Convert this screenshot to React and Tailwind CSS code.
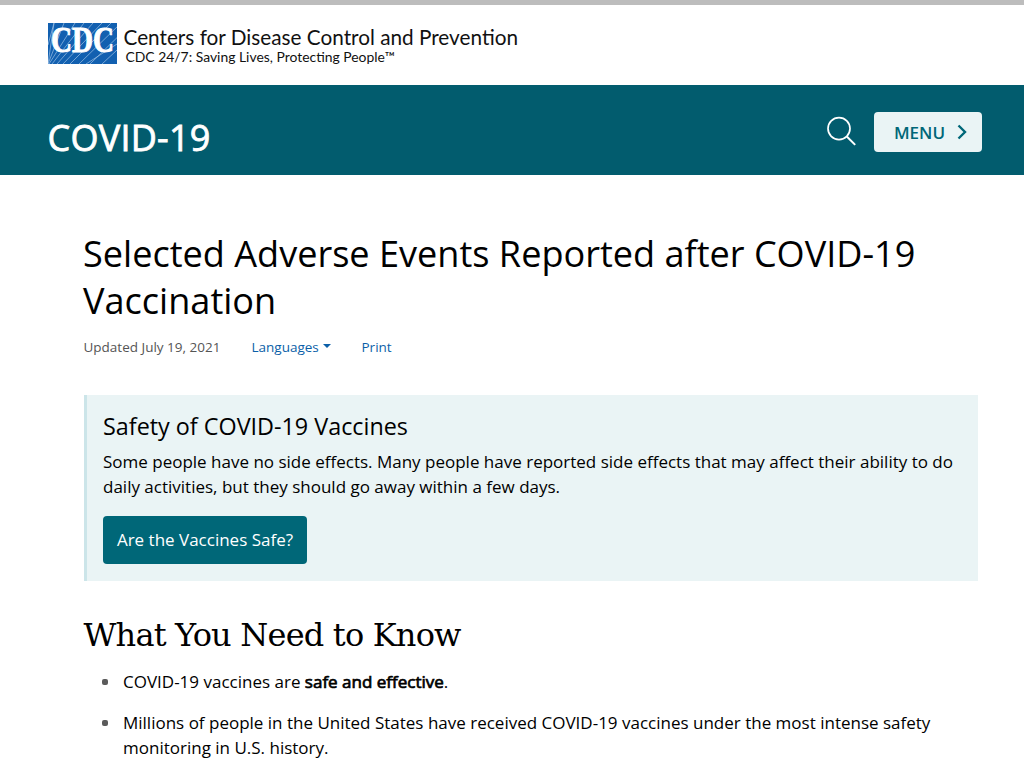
const keyPoints = [
  {
    id: 1,
    content: (
      <>
        COVID-19 vaccines are <strong className="font-normal [-webkit-text-stroke:0.7px_black]">safe and effective</strong>.
      </>
    ),
  },
  {
    id: 2,
    content:
      "Millions of people in the United States have received COVID-19 vaccines under the most intense safety monitoring in U.S. history.",
  },
];

const rays = [
  [0, 6], [0, 16], [1, 27], [4, 36], [9, 45], [15, 54], [22, 63], [31, 73], [42, 84], [54, 98],
];

function Logo() {
  return (
    <svg width="480" height="44" viewBox="0 0 480 44" className="block">
      <svg x="0" y="1" width="69" height="41" viewBox="0 0 69 41">
        <rect width="69" height="41" fill="#1260b0" />
        <g stroke="#9fc3e6" strokeWidth="0.7">
          {rays.map(([x1, x2]) => (
            <line key={x2} x1={x1} y1="41" x2={x2} y2="0" />
          ))}
          <line x1="0" y1="22" x2="6" y2="0" />
          <line x1="38" y1="41" x2="69" y2="21" />
        </g>
        <text
          x="3"
          y="29"
          fontSize="35"
          textLength="63"
          lengthAdjust="spacingAndGlyphs"
          fill="white"
          stroke="white"
          strokeWidth="1"
          className="font-['Liberation_Serif',serif] font-bold"
        >
          CDC
        </text>
      </svg>
      <g fill="#111" className="font-['Lato',sans-serif]">
        <text x="75.5" y="22.5" fontSize="20.5" textLength="394.5" lengthAdjust="spacingAndGlyphs">
          Centers for Disease Control and Prevention
        </text>
        <text x="77.5" y="40" fontSize="13.5" textLength="269.5" lengthAdjust="spacingAndGlyphs">
          CDC 24/7: Saving Lives, Protecting People™
        </text>
      </g>
    </svg>
  );
}

function Banner() {
  return (
    <div className="flex h-[90px] items-center justify-between bg-[#025c6e] pl-[47.5px] pr-[42px]">
      <h2 className="pt-4 text-[36px] leading-[48px] tracking-[0.25px] text-white [-webkit-text-stroke:0.8px_white]">
        COVID-19
      </h2>
      <div className="flex items-center gap-[17px] pt-1">
        <svg width="32" height="32" viewBox="0 0 32 32" fill="none" stroke="white" strokeWidth="1.7">
          <circle cx="14" cy="12.6" r="11" />
          <path d="m21.8 20.5 8.4 8.4" strokeWidth="2" />
        </svg>
        <button className="flex h-10 w-[108px] items-center justify-center gap-3 rounded-[4px] bg-[#eaf4f5] pt-px pl-[5px] text-[17px] font-semibold text-[#006778]">
          MENU
          <svg width="10" height="16" viewBox="0 0 10 16" fill="none" stroke="currentColor" strokeWidth="2.4" className="-mt-[2px]">
            <path d="M1.5 1.5 8 8l-6.5 6.5" />
          </svg>
        </button>
      </div>
    </div>
  );
}

function SafetyCallout() {
  return (
    <section className="h-[186px] w-[894px] border-l-[3px] border-[#cce5e9] bg-[#eaf4f5] pr-[17px] pl-[16.5px] pt-[16px]">
      <h3 className="text-[23.35px] leading-[30px]">Safety of COVID-19 Vaccines</h3>
      <p className="mt-[8px] text-[17px] leading-[25px]">
        Some people have no side effects. Many people have reported side effects that may affect their ability to do
        daily activities, but they should go away within a few days.
      </p>
      <button className="mt-[17px] h-12 w-[204px] rounded-[4px] bg-[#006778] text-[17px] whitespace-nowrap text-white">
        Are the Vaccines Safe?
      </button>
    </section>
  );
}

export default function App() {
  return (
    <div className="h-[768px] w-[1024px] overflow-hidden bg-white font-['Open_Sans',sans-serif] text-black">
      <header>
        <div className="h-[85px] border-t-[5px] border-[#bdbdbd] pt-[17px] pl-12">
          <Logo />
        </div>
        <Banner />
      </header>
      <main className="pl-[83.5px] pt-[55px]">
        <h1 className="-ml-[0.5px] w-[880px] text-[36.1px] leading-[47px]">
          Selected Adverse Events Reported after COVID-19 Vaccination
        </h1>
        <div className="mt-[13px] mb-[37.5px] flex h-5 items-center text-[13.5px]">
          <span className="w-[168px] text-[#555]">Updated July 19, 2021</span>
          <a className="flex w-[110px] items-center gap-1 text-[#0b5fa8]">
            Languages
            <svg width="8" height="4" viewBox="0 0 8 4" fill="currentColor" className="mb-0.5">
              <path d="M0 0h8L4 4z" />
            </svg>
          </a>
          <a className="text-[#0b5fa8]">Print</a>
        </div>
        <SafetyCallout />
        <h2 className="mt-[32px] font-['DejaVu_Serif',serif] text-[32px] leading-[44px] tracking-[-0.8px] whitespace-nowrap">
          What You Need to Know
        </h2>
        <ul className="mt-[12.5px] flex flex-col gap-4 text-[17px] leading-[25px]">
          {keyPoints.map(point => (
            <li key={point.id} className="flex w-[870px] gap-[15.5px] pl-[18px]">
              <span className="mt-[10px] size-[6px] shrink-0 rounded-[2px] bg-[#5b5b5b]" />
              <span>{point.content}</span>
            </li>
          ))}
        </ul>
      </main>
    </div>
  );
}
